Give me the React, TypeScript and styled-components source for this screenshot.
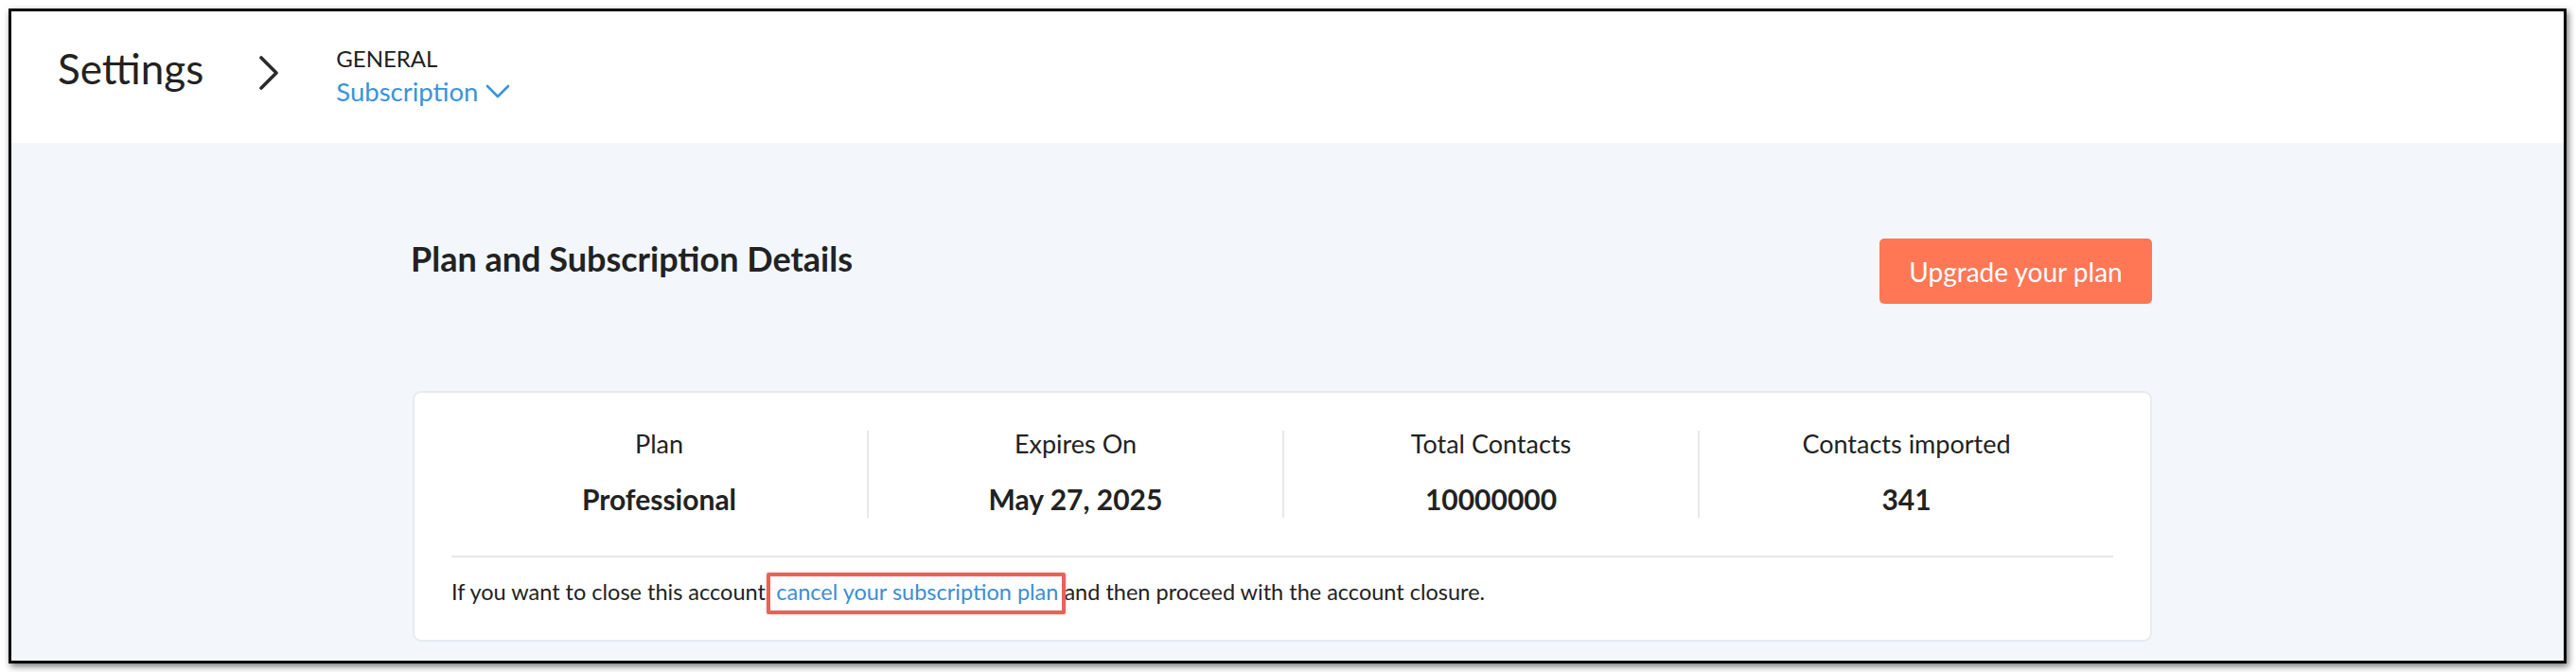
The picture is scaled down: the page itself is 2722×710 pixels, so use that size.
import React from "react";
import styled, { createGlobalStyle } from "styled-components";

const Global = createGlobalStyle`
  html, body { margin: 0; padding: 0; background: #ffffff; }
  body { font-family: Lato, "Noto Sans", sans-serif; color: #222222; }
  * { box-sizing: border-box; }
`;

const Page = styled.div`
  width: 2722px;
  height: 710px;
  padding: 9px 0 0 9px;
`;

const Frame = styled.div`
  width: 2703px;
  height: 692px;
  border: 3px solid #000;
  box-shadow: 2px 3px 7px rgba(0, 0, 0, 0.55);
  display: flex;
  flex-direction: column;
  overflow: hidden;
`;

const Header = styled.header`
  height: 139px;
  flex: none;
  background: #ffffff;
  display: flex;
  align-items: flex-start;
  padding: 0 0 0 49px;
`;

const PageTitle = styled.h1`
  margin: 34px 0 0 0;
  font-size: 44px;
  font-weight: 400;
  line-height: 52px;
  color: #222;
`;

const Crumb = styled.div`
  margin: 47px 0 0 58px;
  display: flex;
`;

const Trail = styled.div`
  margin: 36px 0 0 60px;
  display: flex;
  flex-direction: column;
`;

const Section = styled.div`
  font-size: 24px;
  line-height: 28px;
  color: #222;
  text-transform: uppercase;
`;

const Current = styled.div`
  display: flex;
  align-items: center;
  gap: 8px;
  font-size: 27.5px;
  line-height: 33px;
  color: #3a93dc;
  margin-top: 4px;
`;

const Main = styled.main`
  flex: 1;
  background: #f3f7fb;
  padding: 101px 0 0 424px;
`;

const Container = styled.div`
  width: 1838px;
`;

const TitleRow = styled.div`
  display: flex;
  justify-content: space-between;
  align-items: flex-start;
`;

const Heading = styled.h2`
  margin: 0 0 0 -2px;
  font-size: 36px;
  font-weight: 700;
  line-height: 42px;
  color: #222;
`;

const UpgradeButton = styled.button`
  height: 69px;
  width: 288px;
  border: none;
  border-radius: 5px;
  background: #ff7755;
  color: #ffffff;
  font-family: Lato, "Noto Sans", sans-serif;
  font-size: 28px;
  font-weight: 400;
  cursor: pointer;
`;

const Card = styled.section`
  margin-top: 92px;
  background: #ffffff;
  border: 2px solid #e6ebf0;
  border-radius: 9px;
  padding: 40px 39px 35px 39px;
`;

const Stats = styled.div`
  display: grid;
  grid-template-columns: repeat(4, 1fr);
`;

const Stat = styled.div<{ $first?: boolean }>`
  height: 92px;
  display: flex;
  flex-direction: column;
  align-items: center;
  border-left: ${(p) => (p.$first ? "none" : "2px solid #e8e8e8")};
`;

const StatLabel = styled.div`
  font-size: 27px;
  line-height: 32px;
  margin-top: -2px;
  color: #222;
`;

const StatValue = styled.div`
  margin-top: 24px;
  font-size: 30px;
  font-weight: 700;
  line-height: 36px;
  color: #222;
`;

const Divider = styled.hr`
  margin: 40px 0 0 0;
  border: none;
  height: 2px;
  background: #e6e6e6;
`;

const Note = styled.p`
  margin: 20px 0 0 0;
  font-size: 23.5px;
  line-height: 32px;
  color: #222;
`;

const Link = styled.a`
  position: relative;
  color: #3b8ed4;
  text-decoration: none;
  &::after {
    content: "";
    position: absolute;
    left: -10px;
    right: -8px;
    top: -6px;
    bottom: -10px;
    border: 4px solid #e8625a;
    border-radius: 2px;
    box-shadow: 0 0 3px rgba(232, 98, 90, 0.4);
    pointer-events: none;
  }
`;

const ChevronRight = () => (
  <svg width="22" height="36" viewBox="0 0 22 36" fill="none">
    <polyline
      points="3,2 19,18 3,34"
      stroke="#2b2b2b"
      strokeWidth="3.6"
      strokeLinecap="round"
      strokeLinejoin="round"
    />
  </svg>
);

const ChevronDown = () => (
  <svg width="26" height="15" viewBox="0 0 26 15" fill="none">
    <polyline
      points="2,2 13,13 24,2"
      stroke="#3a93dc"
      strokeWidth="2.6"
      strokeLinecap="round"
      strokeLinejoin="round"
    />
  </svg>
);

const stats = [
  { label: "Plan", value: "Professional" },
  { label: "Expires On", value: "May 27, 2025" },
  { label: "Total Contacts", value: "10000000" },
  { label: "Contacts imported", value: "341" },
];

export default function App() {
  return (
    <>
      <Global />
      <Page>
        <Frame>
          <Header>
            <PageTitle>Settings</PageTitle>
            <Crumb>
              <ChevronRight />
            </Crumb>
            <Trail>
              <Section>General</Section>
              <Current>
                Subscription
                <ChevronDown />
              </Current>
            </Trail>
          </Header>
          <Main>
            <Container>
              <TitleRow>
                <Heading>Plan and Subscription Details</Heading>
                <UpgradeButton>Upgrade your plan</UpgradeButton>
              </TitleRow>
              <Card>
                <Stats>
                  {stats.map((s, i) => (
                    <Stat key={s.label} $first={i === 0}>
                      <StatLabel>{s.label}</StatLabel>
                      <StatValue>{s.value}</StatValue>
                    </Stat>
                  ))}
                </Stats>
                <Divider />
                <Note>
                  If you want to close this account,{" "}
                  <Link href="#">cancel your subscription plan</Link> and then
                  proceed with the account closure.
                </Note>
              </Card>
            </Container>
          </Main>
        </Frame>
      </Page>
    </>
  );
}
